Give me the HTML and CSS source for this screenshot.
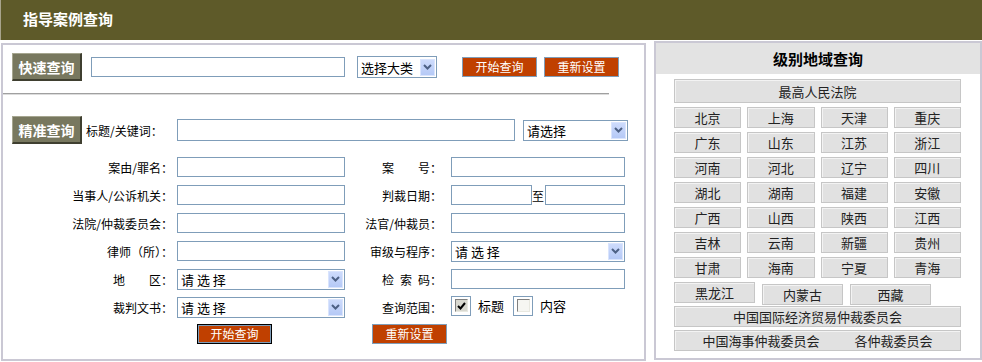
FILE: index.html
```html
<!DOCTYPE html>
<html lang="zh-CN">
<head>
    <meta charset="UTF-8">
    <title>指导案例查询</title>
    <link rel="stylesheet" href="styles.css">
</head>
<body>
    <div class="top">指导案例查询</div>
    <div class="main">
        <div class="search">
            <div class="quick">
                <span class="tag">快速查询</span>
                <input class="txt q-key" type="text">
                <div class="sel q-cat"><span>选择大类</span><i class="arr"><svg width="9" height="6" viewBox="0 0 9 6"><path d="M1 1 L4.5 4.5 L8 1" fill="none" stroke="#4d6185" stroke-width="2"/></svg></i></div>
                <button class="btn q-go">开始查询</button>
                <button class="btn q-reset">重新设置</button>
            </div>
            <div class="rule"></div>
            <div class="exact">
                <span class="tag">精准查询</span>
                <span class="kw-label">标题/关键词：</span>
                <input class="txt kw" type="text">
                <div class="sel kw-sel"><span>请选择</span><i class="arr"><svg width="9" height="6" viewBox="0 0 9 6"><path d="M1 1 L4.5 4.5 L8 1" fill="none" stroke="#4d6185" stroke-width="2"/></svg></i></div>
            </div>
            <div class="rows">
                <div class="row">
                    <span class="l1">案由/罪名：</span><input class="txt f1" type="text">
                    <span class="l2">案&emsp;&emsp;号：</span><input class="txt f2" type="text">
                </div>
                <div class="row">
                    <span class="l1">当事人/公诉机关：</span><input class="txt f1" type="text">
                    <span class="l2">判裁日期：</span>
                    <div class="dates"><input class="txt d1" type="text"><span class="to">至</span><input class="txt d2" type="text"></div>
                </div>
                <div class="row">
                    <span class="l1">法院/仲裁委员会：</span><input class="txt f1" type="text">
                    <span class="l2">法官/仲裁员：</span><input class="txt f2" type="text">
                </div>
                <div class="row">
                    <span class="l1">律师（所）：</span><input class="txt f1" type="text">
                    <span class="l2">审级与程序：</span>
                    <div class="sel f2"><span>请 选 择</span><i class="arr"><svg width="9" height="6" viewBox="0 0 9 6"><path d="M1 1 L4.5 4.5 L8 1" fill="none" stroke="#4d6185" stroke-width="2"/></svg></i></div>
                </div>
                <div class="row">
                    <span class="l1">地&emsp;&emsp;区：</span>
                    <div class="sel f1"><span>请 选 择</span><i class="arr"><svg width="9" height="6" viewBox="0 0 9 6"><path d="M1 1 L4.5 4.5 L8 1" fill="none" stroke="#4d6185" stroke-width="2"/></svg></i></div>
                    <span class="l2">检&ensp;索&ensp;码：</span><input class="txt f2" type="text">
                </div>
                <div class="row">
                    <span class="l1">裁判文书：</span>
                    <div class="sel f1"><span>请 选 择</span><i class="arr"><svg width="9" height="6" viewBox="0 0 9 6"><path d="M1 1 L4.5 4.5 L8 1" fill="none" stroke="#4d6185" stroke-width="2"/></svg></i></div>
                    <span class="l2">查询范围：</span>
                    <div class="scope">
                        <span class="chk on"><span class="box"><svg width="9" height="8" viewBox="0 0 9 8"><path d="M1 4 L3.5 6.5 L8 1" fill="none" stroke="#000" stroke-width="2"/></svg></span></span>
                        <span class="opt">标题</span>
                        <span class="chk"><span class="box"></span></span>
                        <span class="opt">内容</span>
                    </div>
                </div>
            </div>
            <div class="actions">
                <button class="btn go focus">开始查询</button>
                <button class="btn reset">重新设置</button>
            </div>
        </div>

        <div class="region">
            <h2>级别地域查询</h2>
            <div class="courts">
                <a class="cell wide" href="#">最高人民法院</a>
                <div class="prov">
                    <a class="cell" href="#">北京</a><a class="cell" href="#">上海</a><a class="cell" href="#">天津</a><a class="cell" href="#">重庆</a>
                    <a class="cell" href="#">广东</a><a class="cell" href="#">山东</a><a class="cell" href="#">江苏</a><a class="cell" href="#">浙江</a>
                    <a class="cell" href="#">河南</a><a class="cell" href="#">河北</a><a class="cell" href="#">辽宁</a><a class="cell" href="#">四川</a>
                    <a class="cell" href="#">湖北</a><a class="cell" href="#">湖南</a><a class="cell" href="#">福建</a><a class="cell" href="#">安徽</a>
                    <a class="cell" href="#">广西</a><a class="cell" href="#">山西</a><a class="cell" href="#">陕西</a><a class="cell" href="#">江西</a>
                    <a class="cell" href="#">吉林</a><a class="cell" href="#">云南</a><a class="cell" href="#">新疆</a><a class="cell" href="#">贵州</a>
                    <a class="cell" href="#">甘肃</a><a class="cell" href="#">海南</a><a class="cell" href="#">宁夏</a><a class="cell" href="#">青海</a>
                </div>
                <div class="extra">
                    <a class="cell" href="#">黑龙江</a>
                    <a class="cell low" href="#">内蒙古</a>
                    <a class="cell low" href="#">西藏</a>
                </div>
                <a class="cell wide cietac" href="#">中国国际经济贸易仲裁委员会</a>
                <div class="cell wide pair">
                    <a href="#">中国海事仲裁委员会</a>
                    <a href="#">各仲裁委员会</a>
                </div>
            </div>
        </div>
    </div>
</body>
</html>
```

FILE: styles.css
```css
body {
    margin: 0;
    font-family: "Noto Sans CJK SC", sans-serif;
    font-size: 12px;
    color: #000;
    background: #fff;
    width: 982px;
}
.top {
    height: 40px;
    line-height: 38px;
    padding-left: 22px;
    background-color: #5e5a29;
    border-left: 1px solid #a8a48c;
    color: #fff;
    font-size: 15px;
    font-weight: bold;
    box-sizing: border-box;
}
.main {
    display: flex;
    align-items: flex-start;
}

/* left: search form */
.search {
    margin: 3px 0 0 1px;
    width: 645px;
    height: 318px;
    border: 2px solid #cac8d4;
    box-sizing: border-box;
}
.tag {
    display: inline-block;
    width: 70px;
    height: 28px;
    line-height: 26px;
    text-align: center;
    background-color: #78785f;
    border-top: 1px solid #a6a690;
    border-left: 1px solid #a6a690;
    border-right: 2px solid #3f3f30;
    border-bottom: 2px solid #3f3f30;
    box-sizing: border-box;
    color: #fff;
    font-size: 14px;
    font-weight: bold;
    flex: none;
}
.txt {
    height: 20px;
    border: 1px solid #7f9db9;
    padding: 0 3px;
    margin: 0;
    box-sizing: border-box;
    font-family: inherit;
    font-size: 12px;
    background: #fff;
    flex: none;
}
.sel {
    display: flex;
    align-items: center;
    height: 21px;
    border: 1px solid #7f9db9;
    box-sizing: border-box;
    background: #fff;
    font-size: 13px;
    line-height: 19px;
    flex: none;
}
.sel span {
    flex: 1;
    padding-left: 3px;
    white-space: nowrap;
}
.arr {
    display: flex;
    align-items: center;
    justify-content: center;
    width: 15px;
    height: 17px;
    margin-right: 1px;
    background: linear-gradient(#cddbfc, #b5c9f6);
    border: 1px solid #d9e4fd;
    box-sizing: border-box;
}
.btn {
    width: 75px;
    height: 20px;
    padding: 0;
    background-color: #c04000;
    border: 1px solid #7f9db9;
    color: #fff;
    font-family: inherit;
    font-size: 12px;
    line-height: 18px;
    cursor: pointer;
    flex: none;
}
.btn.focus {
    border: 1px solid #000;
    box-shadow: inset 0 0 0 1px #7f9db9;
}

.quick {
    display: flex;
    align-items: center;
    margin-top: 8px;
    padding-left: 9px;
}
.q-key { margin-left: 9px; width: 254px; }
.q-cat { margin-left: 12px; width: 80px; height: 22px; }
.q-go { margin-left: 25px; }
.q-reset { margin-left: 7px; }

.rule {
    margin-top: 12px;
    width: 606px;
    border-top: 1px solid #a0a0a0;
    border-bottom: 1px solid #dcdcdc;
}

.exact {
    display: flex;
    align-items: center;
    margin-top: 21px;
    padding-left: 9px;
}
.kw-label { margin-left: 4px; width: 91px; }
.kw { width: 338px; height: 22px; }
.kw-sel { margin-left: 8px; width: 105px; }

.rows { margin-top: 9px; }
.row {
    display: flex;
    align-items: center;
    height: 28px;
}
.l1, .l2 {
    text-align: right;
    box-sizing: border-box;
    white-space: nowrap;
    flex: none;
}
.l1 { width: 174px; padding-right: 4px; }
.l2 { width: 106px; padding-right: 9px; }
.f1 { width: 168px; }
.f2 { width: 174px; }
.dates {
    display: flex;
    align-items: center;
    width: 174px;
}
.d1 { width: 81px; }
.to { width: 13px; }
.d2 { width: 80px; }

.scope {
    display: flex;
    align-items: center;
    margin-top: -3px;
}
.chk {
    display: flex;
    align-items: center;
    justify-content: center;
    width: 20px;
    height: 20px;
    border: 1px solid #7f9db9;
    box-sizing: border-box;
}
.chk .box {
    display: flex;
    align-items: center;
    justify-content: center;
    width: 13px;
    height: 13px;
    border-top: 1px solid #808080;
    border-left: 1px solid #808080;
    border-right: 1px solid #e8e8e0;
    border-bottom: 1px solid #e8e8e0;
    box-sizing: border-box;
    background: #f6f6f2;
}
.chk.on .box { background: #d8d8d0; }
.opt { margin: 0 9px 0 7px; font-size: 13px; }

.actions {
    display: flex;
    margin-top: 3px;
    padding-left: 194px;
}
.actions .reset { margin-left: 100px; }

/* right: region links */
.region {
    margin: 1px 0 0 8px;
    width: 328px;
    height: 319px;
    border: 2px solid #cac8d4;
    box-sizing: border-box;
}
.region h2 {
    margin: 0;
    height: 31px;
    line-height: 31px;
    background-color: #e3e3e3;
    text-align: center;
    font-size: 15px;
}
.courts {
    padding: 5px 19px 0 18px;
}
.cell {
    display: flex;
    align-items: center;
    justify-content: center;
    height: 21px;
    background-color: #e1e1e1;
    border: 1px solid #c6c6c6;
    box-shadow: inset 1px 1px 0 #f3f3f3;
    box-sizing: border-box;
    color: #222;
    font-size: 13px;
    text-decoration: none;
}
.cell.wide { height: 24px; }
.prov {
    display: grid;
    grid-template-columns: repeat(4, 1fr);
    gap: 4px 6px;
    margin-top: 4px;
}
.extra {
    display: flex;
    align-items: flex-start;
    gap: 7px;
    margin-top: 4px;
}
.extra .cell { width: 81px; }
.extra .low { margin-top: 2px; }
.cietac { margin-top: 1px; }
.cietac.wide, .pair.wide { height: 21px; }
.pair {
    margin-top: 3px;
    gap: 35px;
}
.pair a {
    color: #222;
    text-decoration: none;
}
```
